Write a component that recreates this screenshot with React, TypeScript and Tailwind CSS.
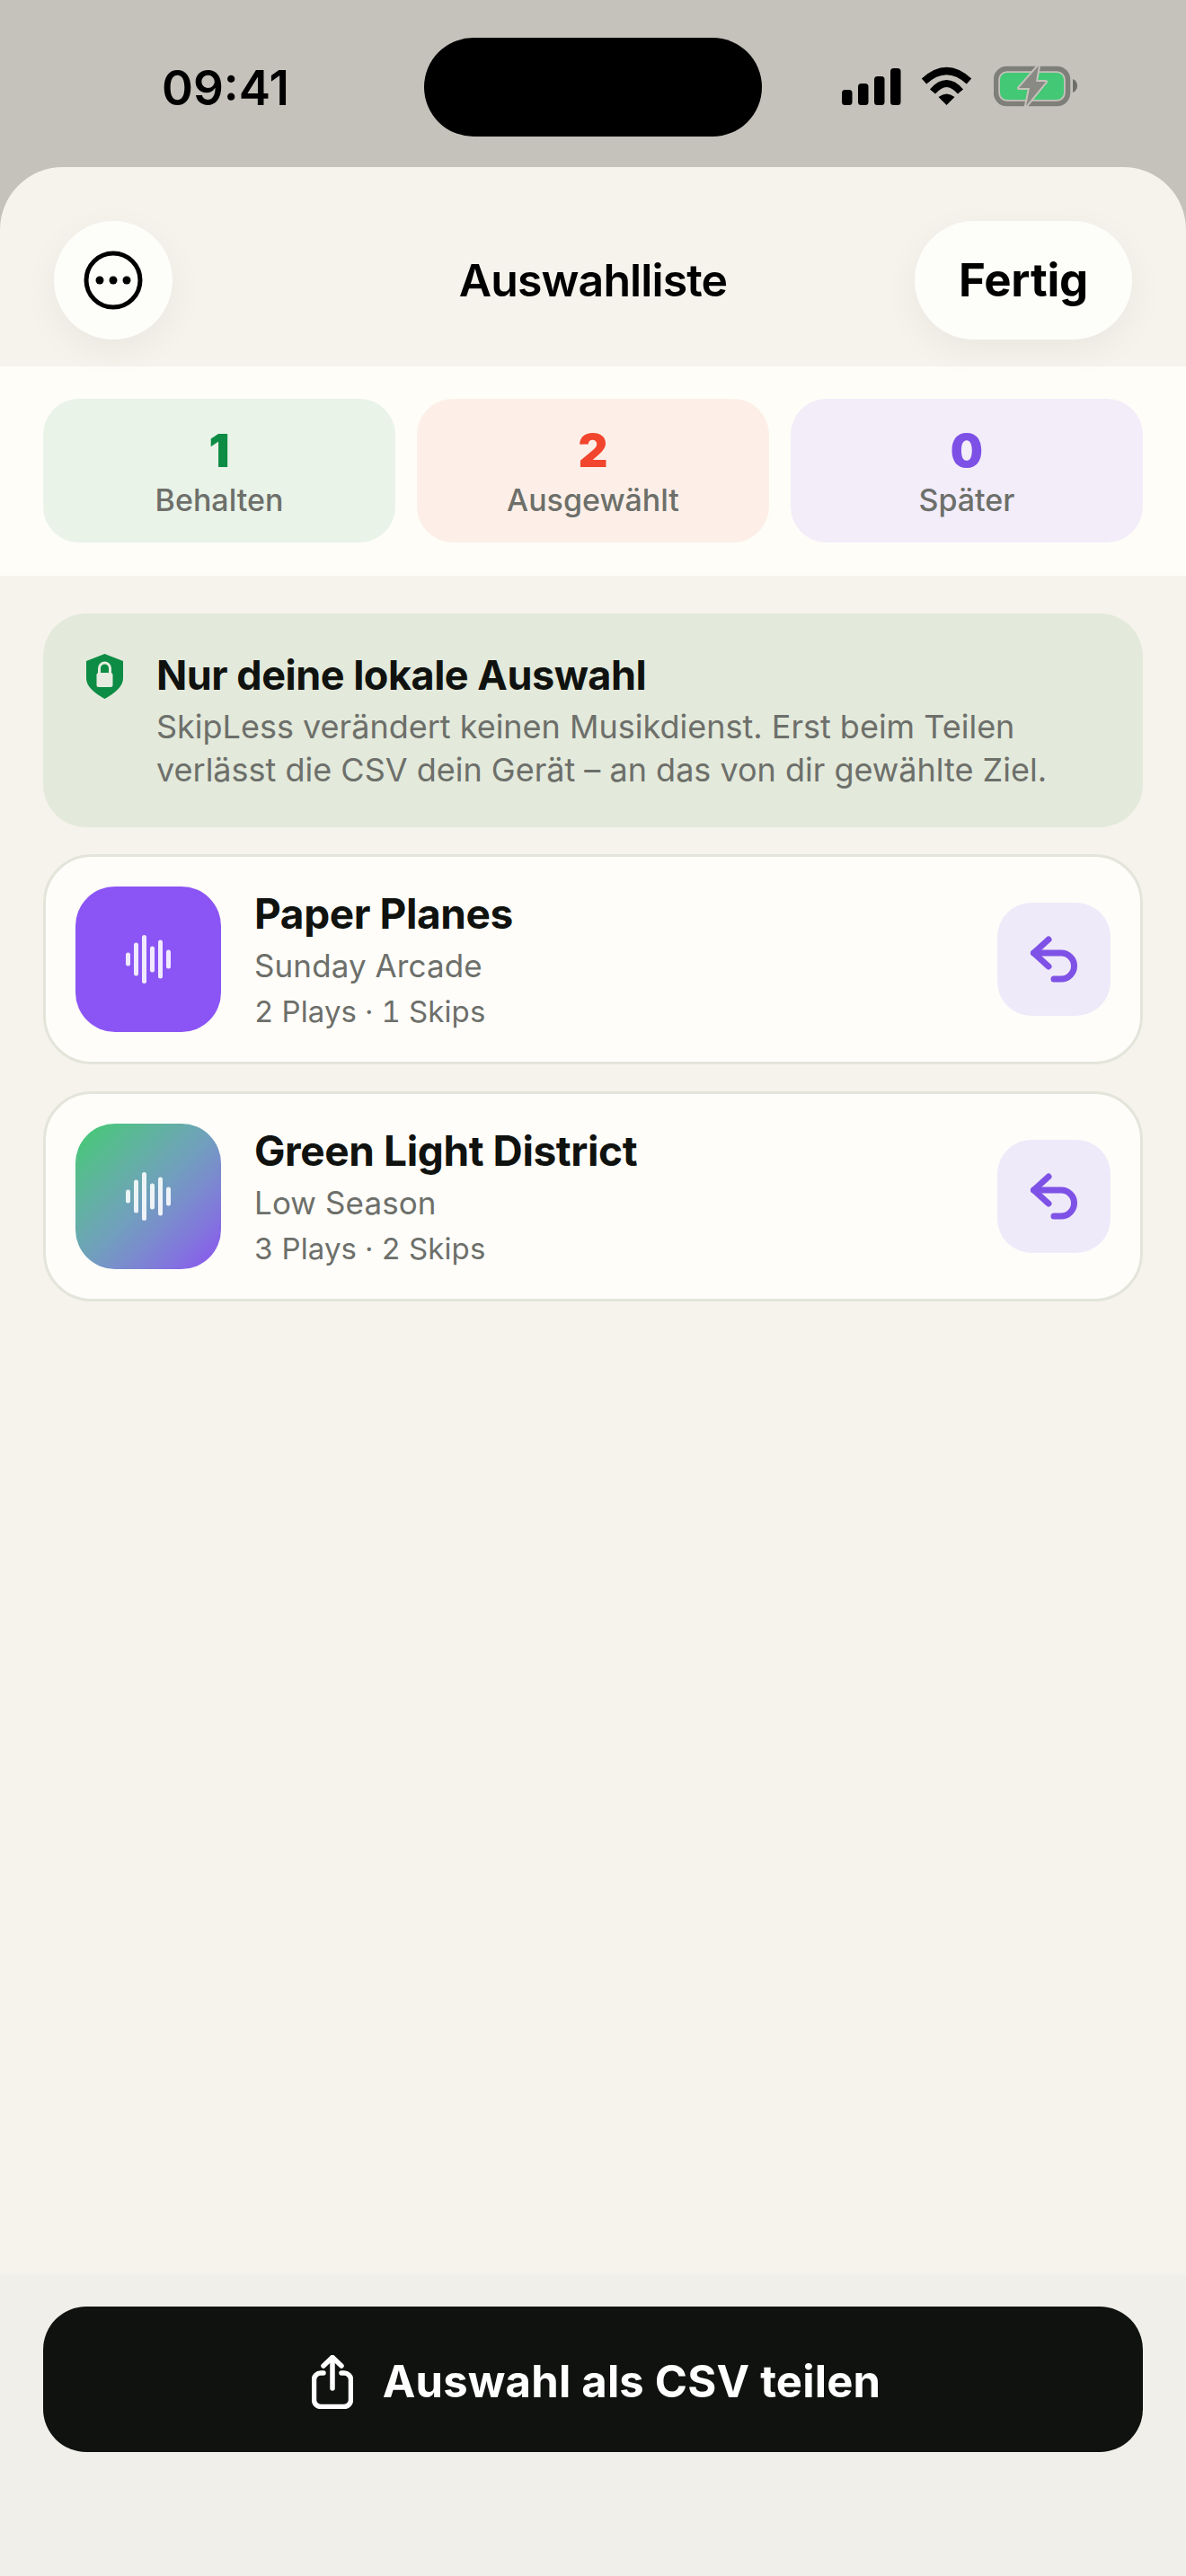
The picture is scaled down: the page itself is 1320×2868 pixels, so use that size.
import React from "react"

const tracks = [
  { title: "Paper Planes", artist: "Sunday Arcade", meta: "2 Plays · 1 Skips", art: "bg-[#8b55f5]" },
  {
    title: "Green Light District",
    artist: "Low Season",
    meta: "3 Plays · 2 Skips",
    art: "bg-gradient-to-br from-[#3fcb6c] via-[#70a0bc] to-[#8a4ff0]",
  },
]

const stats = [
  { value: "1", label: "Behalten", box: "bg-[#e9f3e8]", text: "text-[#0c8c44]" },
  { value: "2", label: "Ausgewählt", box: "bg-[#fdefe8]", text: "text-[#f2452d]" },
  { value: "0", label: "Später", box: "bg-[#f2edf9]", text: "text-[#7d50e6]" },
]

const StatusIcons = () => (
  <div className="flex items-start mt-[73px]">
    {/* signal */}
    <svg width="66" height="44" viewBox="0 0 66 44" className="mr-[22px]">
      <rect x="0" y="27" width="11.5" height="17" rx="3.5" fill="#000" />
      <rect x="18" y="20" width="11.5" height="24" rx="3.5" fill="#000" />
      <rect x="36" y="12" width="11.5" height="32" rx="3.5" fill="#000" />
      <rect x="54" y="3" width="11.5" height="41" rx="3.5" fill="#000" />
    </svg>
    {/* wifi */}
    <svg width="58" height="44" viewBox="0 0 58 44" className="mr-[23px]">
      <g fill="none" stroke="#000" strokeWidth="8">
        <path d="M3.5 17.5 Q28.5 -5.5 53.5 17.5" />
        <path d="M13 29 Q28.5 11 44 29" />
      </g>
      <path d="M19.5 35 Q28.5 28 37.5 35 L28.5 44 Z" fill="#000" />
    </svg>
    {/* battery */}
    <svg width="94" height="48" viewBox="0 0 94 48" className="-mt-[1px]">
      <rect x="2.5" y="4.5" width="80" height="39" rx="12" fill="none" stroke="#7f7f7a" strokeWidth="5.5" />
      <rect x="7" y="9" width="71" height="30" rx="8" fill="#43c875" />
      <path d="M88 16 Q93 18 93 23.5 Q93 29 88 31 Z" fill="#6f6f6a" />
      <path
        d="M50 1 L28 26 L40 26 L36 46 L58 19 L47 19 Z"
        fill="#8a8a85"
        stroke="#c5c2bb"
        strokeWidth="4"
        strokeLinejoin="round"
        paintOrder="stroke"
      />
    </svg>
  </div>
)

const MoreIcon = () => (
  <svg width="66" height="66" viewBox="0 0 66 66">
    <circle cx="33" cy="33" r="30" fill="none" stroke="#000" strokeWidth="5" />
    <circle cx="18" cy="33" r="4.5" fill="#000" />
    <circle cx="33" cy="33" r="4.5" fill="#000" />
    <circle cx="48" cy="33" r="4.5" fill="#000" />
  </svg>
)

const ShieldIcon = () => (
  <svg width="41" height="50" viewBox="0 0 41 50" className="shrink-0 mt-[2px]">
    <path
      d="M20.5 0 L41 8 V27 C41 37 30 45 20.5 50 C11 45 0 37 0 27 V8 Z"
      fill="#0c8c44"
    />
    <path d="M14.5 22 V16 a6 6 0 0 1 12 0 V22" fill="none" stroke="#e6ecdf" strokeWidth="3" />
    <rect x="11.5" y="21" width="18" height="16" rx="2.5" fill="#e6ecdf" />
  </svg>
)

const Waveform = () => (
  <svg width="50" height="54" viewBox="0 0 50 54">
    <g fill="#fff" fillOpacity="0.88">
      <rect x="0" y="19.5" width="5" height="15" rx="2.5" />
      <rect x="9" y="8.5" width="5" height="37" rx="2.5" />
      <rect x="18" y="0" width="5" height="54" rx="2.5" />
      <rect x="27" y="12.5" width="5" height="29" rx="2.5" />
      <rect x="36" y="5.5" width="5" height="43" rx="2.5" />
      <rect x="45" y="16.5" width="5" height="21" rx="2.5" />
    </g>
  </svg>
)

const UndoIcon = () => (
  <svg width="66" height="66" viewBox="0 0 66 66" fill="none" stroke="#7e52e6" strokeWidth="7" strokeLinecap="round" strokeLinejoin="round">
    <path d="M27 11 L10.5 26 L27 41" />
    <path d="M10.5 26 H41 a14.5 14.5 0 0 1 0 29 H33" />
  </svg>
)

const ShareIcon = () => (
  <svg width="46" height="60" viewBox="0 0 46 60" fill="none" stroke="#fff" strokeWidth="5.5" strokeLinecap="round" strokeLinejoin="round">
    <path d="M13 20 H10 a7.5 7.5 0 0 0 -7.5 7.5 V50 a7.5 7.5 0 0 0 7.5 7.5 H36 a7.5 7.5 0 0 0 7.5 -7.5 V27.5 a7.5 7.5 0 0 0 -7.5 -7.5 H33" />
    <path d="M23 37 V3" />
    <path d="M13 12 L23 2.5 L33 12" />
  </svg>
)

export default function App() {
  return (
    <div className="w-[1320px] h-[2868px] flex flex-col bg-[#c5c2bb] font-['Inter','Noto_Sans',sans-serif] overflow-hidden">
      {/* Status bar */}
      <div className="relative h-[186px] shrink-0 flex justify-between pl-[180px] pr-[120px]">
        <span className="mt-[68px] text-[53px] leading-[60px] font-semibold text-black">09:41</span>
        <div className="absolute left-[472px] top-[42px] w-[376px] h-[110px] rounded-[55px] bg-black" />
        <StatusIcons />
      </div>

      {/* Sheet */}
      <div className="flex-1 flex flex-col bg-[#f5f3ec] rounded-t-[70px] overflow-hidden">
        <div className="relative z-10 grid grid-cols-[1fr_auto_1fr] items-start h-[222px] px-[60px] pt-[60px]">
          <button className="justify-self-start w-[132px] h-[132px] rounded-full bg-[#fdfdf9] flex items-center justify-center shadow-[0_12px_40px_rgba(0,0,0,0.05)]">
            <MoreIcon />
          </button>
          <h1 className="h-[132px] flex items-center text-[50px] font-semibold text-black tracking-[-0.9px]">Auswahlliste</h1>
          <button className="justify-self-end w-[242px] h-[132px] rounded-[66px] bg-[#fdfdf9] text-[51px] font-bold text-black tracking-[-0.2px] shadow-[0_12px_40px_rgba(0,0,0,0.05)]">
            Fertig
          </button>
        </div>

        <div className="grid grid-cols-3 gap-[24px] h-[233px] px-[48px] pt-[36px] bg-[#fefdf8]">
          {stats.map((s) => (
            <div key={s.label} className={`h-[160px] rounded-[40px] pt-[28px] flex flex-col items-center ${s.box}`}>
              <span className={`text-[51px] leading-[60px] font-black ${s.text}`}>{s.value}</span>
              <span className="mt-[5px] text-[34px] leading-[40px] font-medium text-[#6d6f6a]">{s.label}</span>
            </div>
          ))}
        </div>

        <div className="flex-1 flex flex-col gap-[30px] px-[48px] pt-[42px]">
          <div className="h-[238px] rounded-[48px] bg-[#e3e9db] pl-[48px] pt-[43px] flex items-start gap-[37px]">
            <ShieldIcon />
            <div>
              <h2 className="text-[45px] leading-[52px] font-bold text-[#10120f] tracking-[-0.5px]">Nur deine lokale Auswahl</h2>
              <p className="mt-[7px] text-[36px] leading-[48px] text-[#6d6f6a] whitespace-nowrap">
                SkipLess verändert keinen Musikdienst. Erst beim Teilen
                <br />
                verlässt die CSV dein Gerät – an das von dir gewählte Ziel.
              </p>
            </div>
          </div>

          {tracks.map((t) => (
            <div
              key={t.title}
              className="h-[234px] rounded-[54px] bg-[#fefdf9] border-[3px] border-[#e3e5da] pl-[33px] pr-[33px] flex items-center"
            >
              <div className={`w-[162px] h-[162px] shrink-0 rounded-[44px] flex items-center justify-center ${t.art}`}>
                <Waveform />
              </div>
              <div className="flex-1 ml-[37px]">
                <div className="text-[46px] leading-[54px] font-bold text-[#10120f] tracking-[-0.4px]">{t.title}</div>
                <div className="mt-[8px] text-[35px] leading-[46px] text-[#6d6f6a] tracking-[0.1px]">{t.artist}</div>
                <div className="mt-[7px] text-[33px] leading-[42px] text-[#6d6f6a] tabular-nums tracking-[0.1px]">{t.meta}</div>
              </div>
              <button className="w-[126px] h-[126px] shrink-0 rounded-[38px] bg-[#efeaf9] flex items-center justify-center">
                <UndoIcon />
              </button>
            </div>
          ))}
        </div>

        <div className="h-[336px] shrink-0 bg-[#f0efea] px-[48px] pt-[36px]">
          <button className="w-full h-[162px] rounded-[48px] bg-[#0f120f] flex items-center justify-center gap-[33px] pt-[6px] pl-[7px]">
            <ShareIcon />
            <span className="text-[49px] font-bold text-white tracking-[0.2px]">Auswahl als CSV teilen</span>
          </button>
        </div>
      </div>
    </div>
  )
}
